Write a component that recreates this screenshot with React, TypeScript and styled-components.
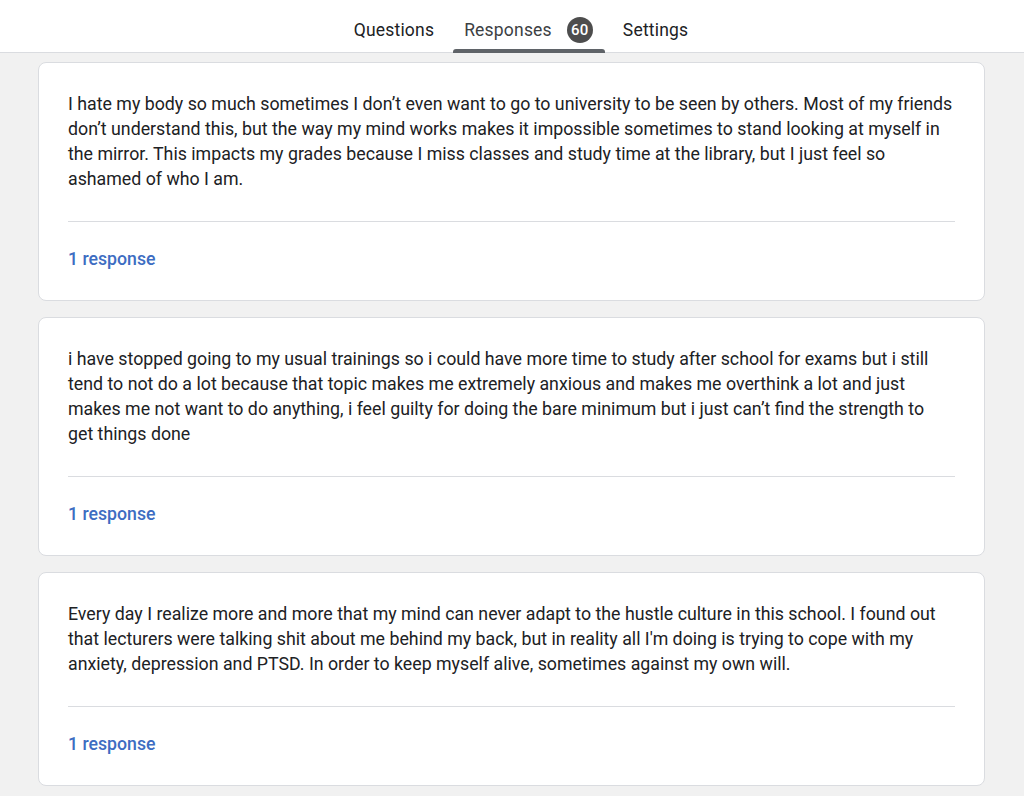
import React from "react";
import styled, { createGlobalStyle } from "styled-components";

const Global = createGlobalStyle`
  html, body { margin: 0; padding: 0; background: #f1f1f1; }
  body { font-family: Roboto, "Noto Sans", Arial, sans-serif; color: #202124; }
`;

const Page = styled.div`
  width: 1024px;
  height: 796px;
  overflow: hidden;
  background: #f1f1f1;
`;

const Header = styled.header`
  height: 52px;
  background: #fff;
  border-bottom: 1px solid #dadce0;
  display: flex;
  justify-content: center;
  align-items: stretch;
`;

const Tabs = styled.nav`
  display: flex;
  align-items: stretch;
  gap: 6px;
  margin-left: 18px;
`;

const Tab = styled.div<{ $active?: boolean }>`
  position: relative;
  display: flex;
  align-items: center;
  gap: 15px;
  padding: 8px 12px 0;
  font-size: 17.5px;
  font-weight: 400;
  color: ${(p) => (p.$active ? "#3c4043" : "#202124")};
  letter-spacing: 0.2px;
  &::after {
    content: "";
    display: ${(p) => (p.$active ? "block" : "none")};
    position: absolute;
    left: 1px;
    right: 0;
    bottom: -1px;
    height: 4px;
    border-radius: 3px 3px 0 0;
    background: #5f6368;
  }
`;

const Badge = styled.span`
  display: inline-flex;
  align-items: center;
  justify-content: center;
  width: 26px;
  height: 26px;
  border-radius: 50%;
  background: #4d4d4d;
  color: #fff;
  font-size: 15px;
  font-weight: 500;
`;

const List = styled.main`
  display: flex;
  flex-direction: column;
  gap: 16px;
  padding: 9px 39px 0 38px;
`;

const Card = styled.section`
  background: #fff;
  border: 1px solid #dadce0;
  border-radius: 8px;
  padding: 29px 29px 29px 29px;
`;

const Body = styled.p`
  margin: 0;
  font-size: 17.78px;
  line-height: 25px;
  color: #202124;
`;

const Line = styled.span`
  display: block;
  white-space: nowrap;
`;

const Divider = styled.hr`
  border: 0;
  border-top: 1px solid #dadce0;
  margin: 29px 0 25px;
`;

const Count = styled.a`
  display: block;
  font-size: 17.7px;
  line-height: 24px;
  font-weight: 500;
  color: #3d6dc2;
  text-decoration: none;
`;

const responses = [
  [
    "I hate my body so much sometimes I don’t even want to go to university to be seen by others. Most of my friends",
    "don’t understand this, but the way my mind works makes it impossible sometimes to stand looking at myself in",
    "the mirror. This impacts my grades because I miss classes and study time at the library, but I just feel so",
    "ashamed of who I am.",
  ],
  [
    "i have stopped going to my usual trainings so i could have more time to study after school for exams but i still",
    "tend to not do a lot because that topic makes me extremely anxious and makes me overthink a lot and just",
    "makes me not want to do anything, i feel guilty for doing the bare minimum but i just can’t find the strength to",
    "get things done",
  ],
  [
    "Every day I realize more and more that my mind can never adapt to the hustle culture in this school. I found out",
    "that lecturers were talking shit about me behind my back, but in reality all I'm doing is trying to cope with my",
    "anxiety, depression and PTSD. In order to keep myself alive, sometimes against my own will.",
  ],
];

export default function App() {
  return (
    <Page>
      <Global />
      <Header>
        <Tabs>
          <Tab>Questions</Tab>
          <Tab $active>
            Responses <Badge>60</Badge>
          </Tab>
          <Tab>Settings</Tab>
        </Tabs>
      </Header>
      <List>
        {responses.map((lines, i) => (
          <Card key={i}>
            <Body>
              {lines.map((l, j) => (
                <Line key={j}>{l}</Line>
              ))}
            </Body>
            <Divider />
            <Count href="#">1 response</Count>
          </Card>
        ))}
      </List>
    </Page>
  );
}
